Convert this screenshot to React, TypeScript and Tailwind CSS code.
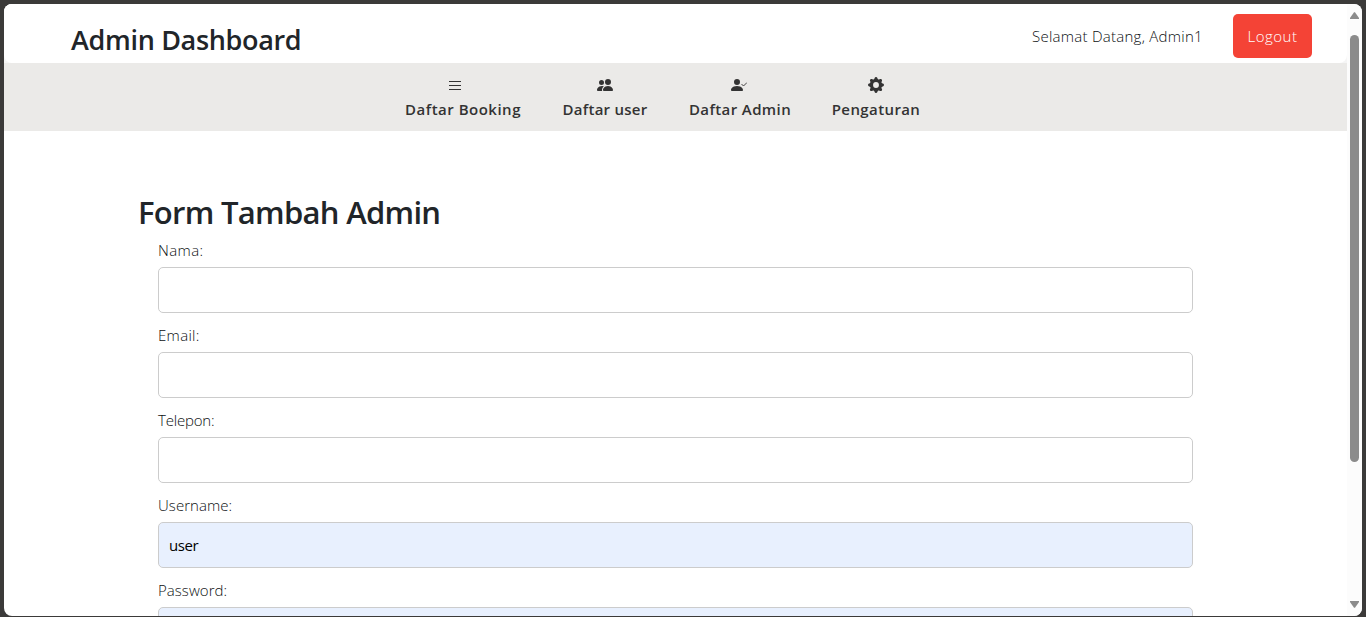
import type { ReactNode } from 'react';

type NavItem = { label: string; icon: ReactNode; className: string; textClass: string; iconClass: string };

const navItems: NavItem[] = [
  {
    label: 'Daftar Booking',
    className: 'w-[116px]',
    textClass: 'tracking-[0.5px]',
    iconClass: 'mr-4',
    icon: (
      <svg width="16" height="16" viewBox="0 0 16 16" fill="#333" shapeRendering="crispEdges">
        <path d="M2 4h12v1H2zM2 8h12v1H2zM2 12h12v1H2z" />
      </svg>
    ),
  },
  {
    label: 'Daftar user',
    className: 'w-[86px]',
    textClass: 'tracking-[0.25px]',
    iconClass: '',
    icon: (
      <svg width="16" height="16" viewBox="0 0 16 16" fill="#333">
        <path d="M7 14s-1 0-1-1 1-4 5-4 5 3 5 4-1 1-1 1zm4-6a3 3 0 1 0 0-6 3 3 0 0 0 0 6M5.216 14A2.2 2.2 0 0 1 5 13c0-1.355.68-2.75 1.936-3.72A6.3 6.3 0 0 0 5 9c-4 0-5 3-5 4s1 1 1 1zM4.5 8a2.5 2.5 0 1 0 0-5 2.5 2.5 0 0 0 0 5" />
      </svg>
    ),
  },
  {
    label: 'Daftar Admin',
    className: 'w-[102px]',
    textClass: 'tracking-[0.4px]',
    iconClass: 'mr-[2px]',
    icon: (
      <svg width="16" height="16" viewBox="0 0 16 16" fill="#333">
        <path d="M16 5.5l-3.5 3.5-2-2" fill="none" stroke="#333" strokeWidth="0.9" />
        <path d="M1 14s-1 0-1-1 1-4 6-4 6 3 6 4-1 1-1 1zm5-6a3 3 0 1 0 0-6 3 3 0 0 0 0 6" />
      </svg>
    ),
  },
  {
    label: 'Pengaturan',
    className: 'w-[88px]',
    textClass: 'tracking-[0.4px]',
    iconClass: '',
    icon: (
      <svg width="16" height="16" viewBox="0 0 16 16" fill="#333">
        <path d="M9.405 1.05c-.413-1.4-2.397-1.4-2.81 0l-.1.34a1.464 1.464 0 0 1-2.105.872l-.31-.17c-1.283-.698-2.686.705-1.987 1.987l.169.311c.446.82.023 1.841-.872 2.105l-.34.1c-1.4.413-1.4 2.397 0 2.81l.34.1a1.464 1.464 0 0 1 .872 2.105l-.17.31c-.698 1.283.705 2.686 1.987 1.987l.311-.169a1.464 1.464 0 0 1 2.105.872l.1.34c.413 1.4 2.397 1.4 2.81 0l.1-.34a1.464 1.464 0 0 1 2.105-.872l.31.17c1.283.698 2.686-.705 1.987-1.987l-.169-.311a1.464 1.464 0 0 1 .872-2.105l.34-.1c1.4-.413 1.4-2.397 0-2.81l-.34-.1a1.464 1.464 0 0 1-.872-2.105l.17-.31c.698-1.283-.705-2.686-1.987-1.987l-.311.169a1.464 1.464 0 0 1-2.105-.872zM8 10.93a2.929 2.929 0 1 1 0-5.86 2.929 2.929 0 0 1 0 5.858z" />
      </svg>
    ),
  },
];

const fields = [
  { id: 'nama', label: 'Nama:', value: '', type: 'text', labelClass: 'tracking-[0.4px]' },
  { id: 'email', label: 'Email:', value: '', type: 'text', labelClass: 'tracking-[0.3px]' },
  { id: 'telepon', label: 'Telepon:', value: '', type: 'text', labelClass: 'tracking-[-0.2px]' },
  { id: 'username', label: 'Username:', value: 'user', type: 'text', labelClass: 'tracking-[0.05px]' },
  { id: 'password', label: 'Password:', value: '', type: 'password', filled: true, labelClass: 'tracking-[0.05px]' },
];

function Header() {
  return (
    <header className="flex h-[59px] items-start rounded-b-lg bg-white pl-[67px] pr-[35px]">
      <h1 className="mt-[18px] whitespace-nowrap text-[27px] font-semibold leading-9 tracking-[-0.33px] text-[#212529]">
        Admin Dashboard
      </h1>
      <div className="ml-auto flex items-start">
        <span className="mr-[31px] mt-5 w-[170px] whitespace-nowrap text-[15px] font-light leading-6 tracking-[0.26px] text-[#0c0f12]">
          Selamat Datang, Admin1
        </span>
        <button className="mt-[10px] h-11 w-[79px] rounded-[5px] bg-[#f44336] pb-px text-[15px] font-light leading-6 tracking-[0.5px] text-white">
          Logout
        </button>
      </div>
    </header>
  );
}

function Nav() {
  return (
    <nav className="flex h-[68px] shrink-0 gap-[41px] bg-[#ebeae8] pl-[401px] text-[#333]">
      {navItems.map((item) => (
        <a key={item.label} href="#" className={`flex flex-col items-center pt-[14px] ${item.className}`}>
          <span className={`block h-4 ${item.iconClass}`}>{item.icon}</span>
          <span className={`mt-1 whitespace-nowrap text-[15px] font-[650] leading-6 ${item.textClass}`}>{item.label}</span>
        </a>
      ))}
    </nav>
  );
}

function Scrollbar() {
  return (
    <div className="flex w-[15px] shrink-0 flex-col items-center bg-[#fcfcfc] pb-2 pt-2">
      <svg width="9" height="7" viewBox="0 0 9 7" fill="#8b8b8b">
        <path d="M4 .3h1L9 6v1H0V6z" />
      </svg>
      <div className="mt-4 h-[427px] w-[9px] rounded-full bg-[#8b8b8b]" />
      <svg className="mt-auto" width="9" height="7" viewBox="0 0 9 7" fill="#8b8b8b">
        <path d="M4 6.7h1L9 1V0H0v1z" />
      </svg>
    </div>
  );
}

export default function App() {
  return (
    <div className="h-[617px] w-[1366px] overflow-hidden bg-[#3b3a39] px-1 pb-px pt-1 font-['Open_Sans','Noto_Sans',sans-serif]">
      <div className="flex h-[612px] overflow-hidden rounded-lg bg-white">
        <div className="flex min-w-0 flex-1 flex-col overflow-hidden">
          <div className="shrink-0 bg-[#f5f5f5]">
            <Header />
          </div>
          <Nav />
          <main className="pl-[134px] pt-[62px]">
            <h2 className="whitespace-nowrap text-[31px] font-semibold leading-[38px] tracking-[-0.7px] text-[#212529]">
              Form Tambah Admin
            </h2>
            <form className="ml-5 mt-[7px] w-[1035px]">
              {fields.map((f) => (
                <div key={f.id} className="h-[85px]">
                  <label htmlFor={f.id} className={`block h-[29px] text-[15px] font-light leading-6 text-[#0c0f12] ${f.labelClass}`}>
                    {f.label}
                  </label>
                  <input
                    id={f.id}
                    type={f.type}
                    defaultValue={f.value}
                    className={`block h-[46px] w-full rounded-[5px] border border-[#ccc] px-[10px] text-[15px] tracking-[-0.4px] text-black outline-none ${
                      f.value || f.filled ? 'bg-[#e8f0fe]' : 'bg-white'
                    }`}
                  />
                </div>
              ))}
            </form>
          </main>
        </div>
        <Scrollbar />
      </div>
    </div>
  );
}
